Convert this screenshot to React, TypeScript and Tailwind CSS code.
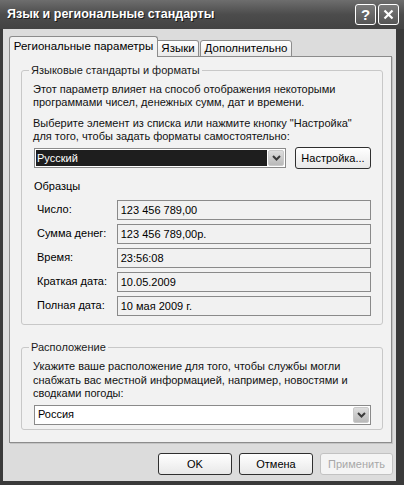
import React from "react";

function Chevron() {
  return (
    <svg width="9" height="6" viewBox="0 0 9 6">
      <path d="M1 1 L4.5 4.5 L8 1" fill="none" stroke="#3a3a3a" strokeWidth="2" />
    </svg>
  );
}

function DropButton() {
  return (
    <div className="w-[16px] h-[16px] mt-[1px] mr-[1px] rounded-[2px] border border-[#c9c9c9] bg-gradient-to-b from-[#dedede] to-[#b9b9b9] flex items-center justify-center">
      <Chevron />
    </div>
  );
}

function Button({ label, disabled, w }: { label: string; disabled?: boolean; w: string }) {
  return (
    <div
      className={
        (disabled
          ? "border-[#c2c2c2] text-[#a8a8a8] bg-[#f4f4f4] "
          : "border-[#2f2f2f] text-black bg-gradient-to-b from-[#ffffff] to-[#e8e8e8] ") +
        w +
        " h-[22px] border rounded-[3px] flex items-center justify-center"
      }
    >
      {label}
    </div>
  );
}

function Field({ label, value }: { label: string; value: string }) {
  return (
    <div className="flex items-center h-[20px]">
      <div className="w-[84px] pl-[4px] -mt-[2px]">{label}</div>
      <div className="w-[255px] h-[20px] border border-[#8a8a8a] bg-[#f1f1f1] flex items-center pl-[3px] pt-[1px]">
        {value}
      </div>
    </div>
  );
}

function Legend({ text }: { text: string }) {
  return (
    <div className="absolute -top-[7px] left-[7px] px-[2px] bg-[#f2f2f2] leading-[13px] text-[#1a1a1a]">
      {text}
    </div>
  );
}

export default function App() {
  return (
    <div className="w-[404px] h-[485px] bg-[#3a3a3a] flex flex-col font-['Liberation_Sans',Arial,sans-serif] text-[11px] text-black whitespace-nowrap">
      {/* Title bar */}
      <div className="h-[29px] flex items-center pl-[7px] pr-[5px] bg-gradient-to-b from-[#6e6e6e] via-[#4c4c4c] to-[#434343]">
        <div className="text-white font-bold text-[12.5px] [text-shadow:1px_1px_0_#1a1a1a]">
          Язык и региональные стандарты
        </div>
        <div className="ml-auto flex gap-[2px]">
          <div className="w-[21px] h-[21px] rounded-[3px] border border-white bg-gradient-to-b from-[#7a7a7a] to-[#555] flex items-center justify-center text-white font-bold text-[15px] leading-none">
            ?
          </div>
          <div className="w-[21px] h-[21px] rounded-[3px] border border-white bg-gradient-to-b from-[#7a7a7a] to-[#555] flex items-center justify-center">
            <svg width="11" height="11" viewBox="0 0 11 11">
              <path d="M1.5 1.5 L9.5 9.5 M9.5 1.5 L1.5 9.5" stroke="white" strokeWidth="2.2" />
            </svg>
          </div>
        </div>
      </div>

      {/* Body */}
      <div className="flex-1 ml-[3px] mr-[8px] mb-[4px] bg-[#dcdcdc] flex flex-col pt-[7px]">
        {/* Tabs */}
        <div className="flex items-end pl-[6px] h-[21px] -mb-px relative z-10">
          <div className="w-[149px] h-[21px] border border-b-0 border-[#8c8c8c] rounded-t-[3px] bg-[#f2f2f2] flex items-center justify-center pb-[1px] text-[11.5px]">
            Региональные параметры
          </div>
          <div className="w-[41px] h-[17px] border border-l-0 border-[#8c8c8c] rounded-tr-[3px] bg-gradient-to-b from-[#ffffff] to-[#e9e9e9] flex items-center justify-center text-[11.5px]">
            Языки
          </div>
          <div className="ml-[1px] w-[92px] h-[17px] border border-[#8c8c8c] rounded-t-[3px] bg-gradient-to-b from-[#ffffff] to-[#e9e9e9] flex items-center justify-center text-[11.5px]">
            Дополнительно
          </div>
        </div>

        {/* Panel */}
        <div className="ml-[6px] mr-[4px] h-[387px] border border-[#8c8c8c] bg-[#f2f2f2] pt-[13px] pl-[11px] pr-[8px] flex flex-col [box-shadow:1px_1px_0_#c4c4c4]">
          {/* Group 1 */}
          <div className="relative border border-[#c8c8c8] rounded-[3px] pt-[12px] px-[11px] pb-[8px]">
            <Legend text="Языковые стандарты и форматы" />
            <div className="leading-[13px] text-[#111]">
              Этот параметр влияет на способ отображения некоторыми
              <br />
              программами чисел, денежных сумм, дат и времени.
            </div>
            <div className="leading-[13px] mt-[8px] text-[#111]">
              Выберите элемент из списка или нажмите кнопку "Настройка"
              <br />
              для того, чтобы задать форматы самостоятельно:
            </div>
            <div className="flex items-center mt-[4px]">
              <div className="ml-[1px] w-[252px] h-[20px] border border-[#8a8a8a] bg-white flex">
                <div className="flex-1 m-[1px] bg-[#1e1e1e] text-white flex items-center pl-[1px]">Русский</div>
                <DropButton />
              </div>
              <div className="ml-[9px]">
                <Button label="Настройка..." w="w-[76px]" />
              </div>
            </div>
            <div className="leading-[13px] mt-[11px] pl-[1px]">Образцы</div>
            <div className="mt-[7px] flex flex-col gap-[4px]">
              <Field label="Число:" value="123 456 789,00" />
              <Field label="Сумма денег:" value="123 456 789,00р." />
              <Field label="Время:" value="23:56:08" />
              <Field label="Краткая дата:" value="10.05.2009" />
              <Field label="Полная дата:" value="10 мая 2009 г." />
            </div>
          </div>

          {/* Group 2 */}
          <div className="relative mt-[22px] border border-[#c8c8c8] rounded-[3px] pt-[12px] px-[11px] pb-[4px]">
            <Legend text="Расположение" />
            <div className="leading-[13.5px] text-[#111]">
              Укажите ваше расположение для того, чтобы службы могли
              <br />
              снабжать вас местной информацией, например, новостями и
              <br />
              сводками погоды:
            </div>
            <div className="mt-[4px] ml-[1px] w-[337px] h-[20px] border border-[#8a8a8a] bg-white flex">
              <div className="flex-1 flex items-center pl-[3px]">Россия</div>
              <DropButton />
            </div>
          </div>
        </div>

        {/* Buttons */}
        <div className="flex justify-end gap-[7px] mt-[10px] pr-[3px]">
          <Button label="OK" w="w-[74px]" />
          <Button label="Отмена" w="w-[74px]" />
          <Button label="Применить" disabled w="w-[73px]" />
        </div>
      </div>
    </div>
  );
}
